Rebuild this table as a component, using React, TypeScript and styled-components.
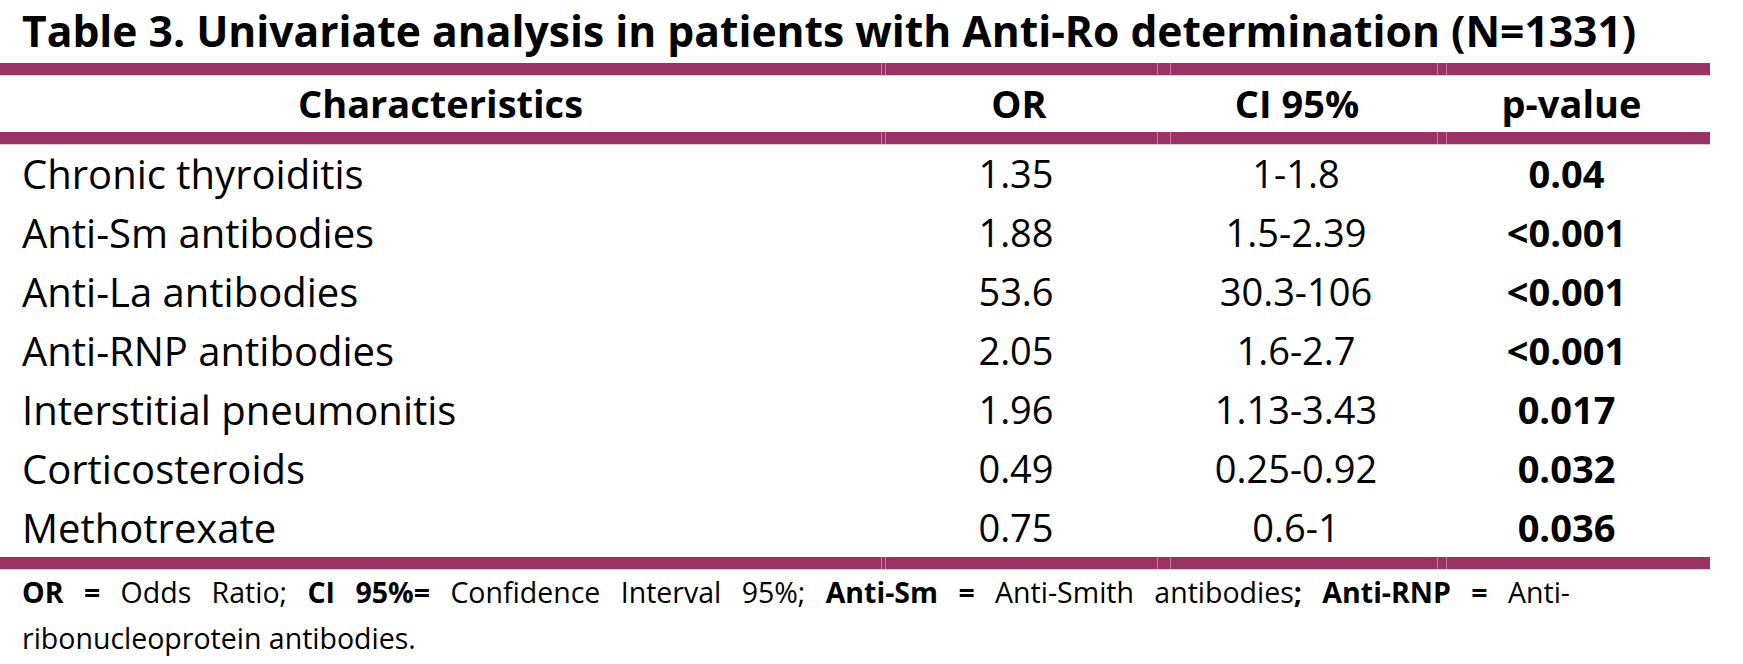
import React from "react"
import styled, { createGlobalStyle } from "styled-components"

const GlobalStyle = createGlobalStyle`
  html, body {
    margin: 0;
    padding: 0;
    background: #ffffff;
  }
  body {
    font-family: "Open Sans", Lato, "Liberation Sans", sans-serif;
    color: #000000;
  }
`

const PLUM = "#9a3365"
const SEAM = "#c07a9c"

const Page = styled.div`
  width: 1743px;
  height: 664px;
  overflow: hidden;
`

const Title = styled.h1`
  margin: 0;
  padding: 6px 0 9px 22px;
  font-size: 42.6px;
  line-height: 48px;
  font-weight: 700;
  white-space: nowrap;
`

const Rule = styled.div`
  width: 1710px;
  height: 12px;
  background: linear-gradient(
    90deg,
    ${PLUM} 0px,
    ${PLUM} 881px,
    ${SEAM} 881px,
    ${SEAM} 882px,
    ${PLUM} 882px,
    ${PLUM} 885px,
    ${SEAM} 885px,
    ${SEAM} 886px,
    ${PLUM} 886px,
    ${PLUM} 1157px,
    ${SEAM} 1157px,
    ${SEAM} 1158px,
    ${PLUM} 1158px,
    ${PLUM} 1170px,
    ${SEAM} 1170px,
    ${SEAM} 1171px,
    ${PLUM} 1171px,
    ${PLUM} 1437px,
    ${SEAM} 1437px,
    ${SEAM} 1438px,
    ${PLUM} 1438px,
    ${PLUM} 1446px,
    ${SEAM} 1446px,
    ${SEAM} 1447px,
    ${PLUM} 1447px
  );
  box-shadow: 0 1px 0 #ecc6d6;
`

const Row = styled.div<{ $height: number }>`
  display: grid;
  grid-template-columns: 881px 276px 280px 273px;
  height: ${(p) => p.$height}px;
  line-height: ${(p) => p.$height}px;
  font-size: 38px;
`

const Cell = styled.div<{ $bold?: boolean; $shift?: number }>`
  font-weight: ${(p) => (p.$bold ? 700 : 400)};
  text-align: center;
  padding-right: ${(p) => p.$shift ?? 0}px;
  white-space: nowrap;
`

const NameCell = styled.div`
  padding-left: 22px;
  font-size: 40px;
  white-space: nowrap;
`

const Footnote = styled.div`
  padding-left: 22px;
  font-size: 28.5px;
  line-height: 46px;
  white-space: nowrap;
`

const FootLine = styled.div<{ $justify?: boolean }>`
  width: ${(p) => (p.$justify ? "1548px" : "auto")};
  text-align: ${(p) => (p.$justify ? "justify" : "left")};
  text-align-last: ${(p) => (p.$justify ? "justify" : "left")};
`

const rows = [
  ["Chronic thyroiditis", "1.35", "1-1.8", "0.04"],
  ["Anti-Sm antibodies", "1.88", "1.5-2.39", "<0.001"],
  ["Anti-La antibodies", "53.6", "30.3-106", "<0.001"],
  ["Anti-RNP antibodies", "2.05", "1.6-2.7", "<0.001"],
  ["Interstitial pneumonitis", "1.96", "1.13-3.43", "0.017"],
  ["Corticosteroids", "0.49", "0.25-0.92", "0.032"],
  ["Methotrexate", "0.75", "0.6-1", "0.036"],
]

export default function App() {
  return (
    <Page>
      <GlobalStyle />
      <Title>Table 3. Univariate analysis in patients with Anti-Ro determination (N=1331)</Title>
      <Rule />
      <Row $height={57}>
        <Cell $bold>Characteristics</Cell>
        <Cell $bold>OR</Cell>
        <Cell $bold>CI 95%</Cell>
        <Cell $bold $shift={4}>p-value</Cell>
      </Row>
      <Rule />
      {rows.map(([name, or, ci, p]) => (
        <Row key={name} $height={59}>
          <NameCell>{name}</NameCell>
          <Cell $shift={6}>{or}</Cell>
          <Cell $shift={2}>{ci}</Cell>
          <Cell $bold $shift={14}>{p}</Cell>
        </Row>
      ))}
      <Rule />
      <Footnote>
        <FootLine $justify>
          <b>OR =</b> Odds Ratio; <b>CI 95%=</b> Confidence Interval 95%; <b>Anti-Sm =</b> Anti-Smith antibodies<b>; Anti-RNP =</b> Anti-
        </FootLine>
        <FootLine>ribonucleoprotein antibodies.</FootLine>
      </Footnote>
    </Page>
  )
}
